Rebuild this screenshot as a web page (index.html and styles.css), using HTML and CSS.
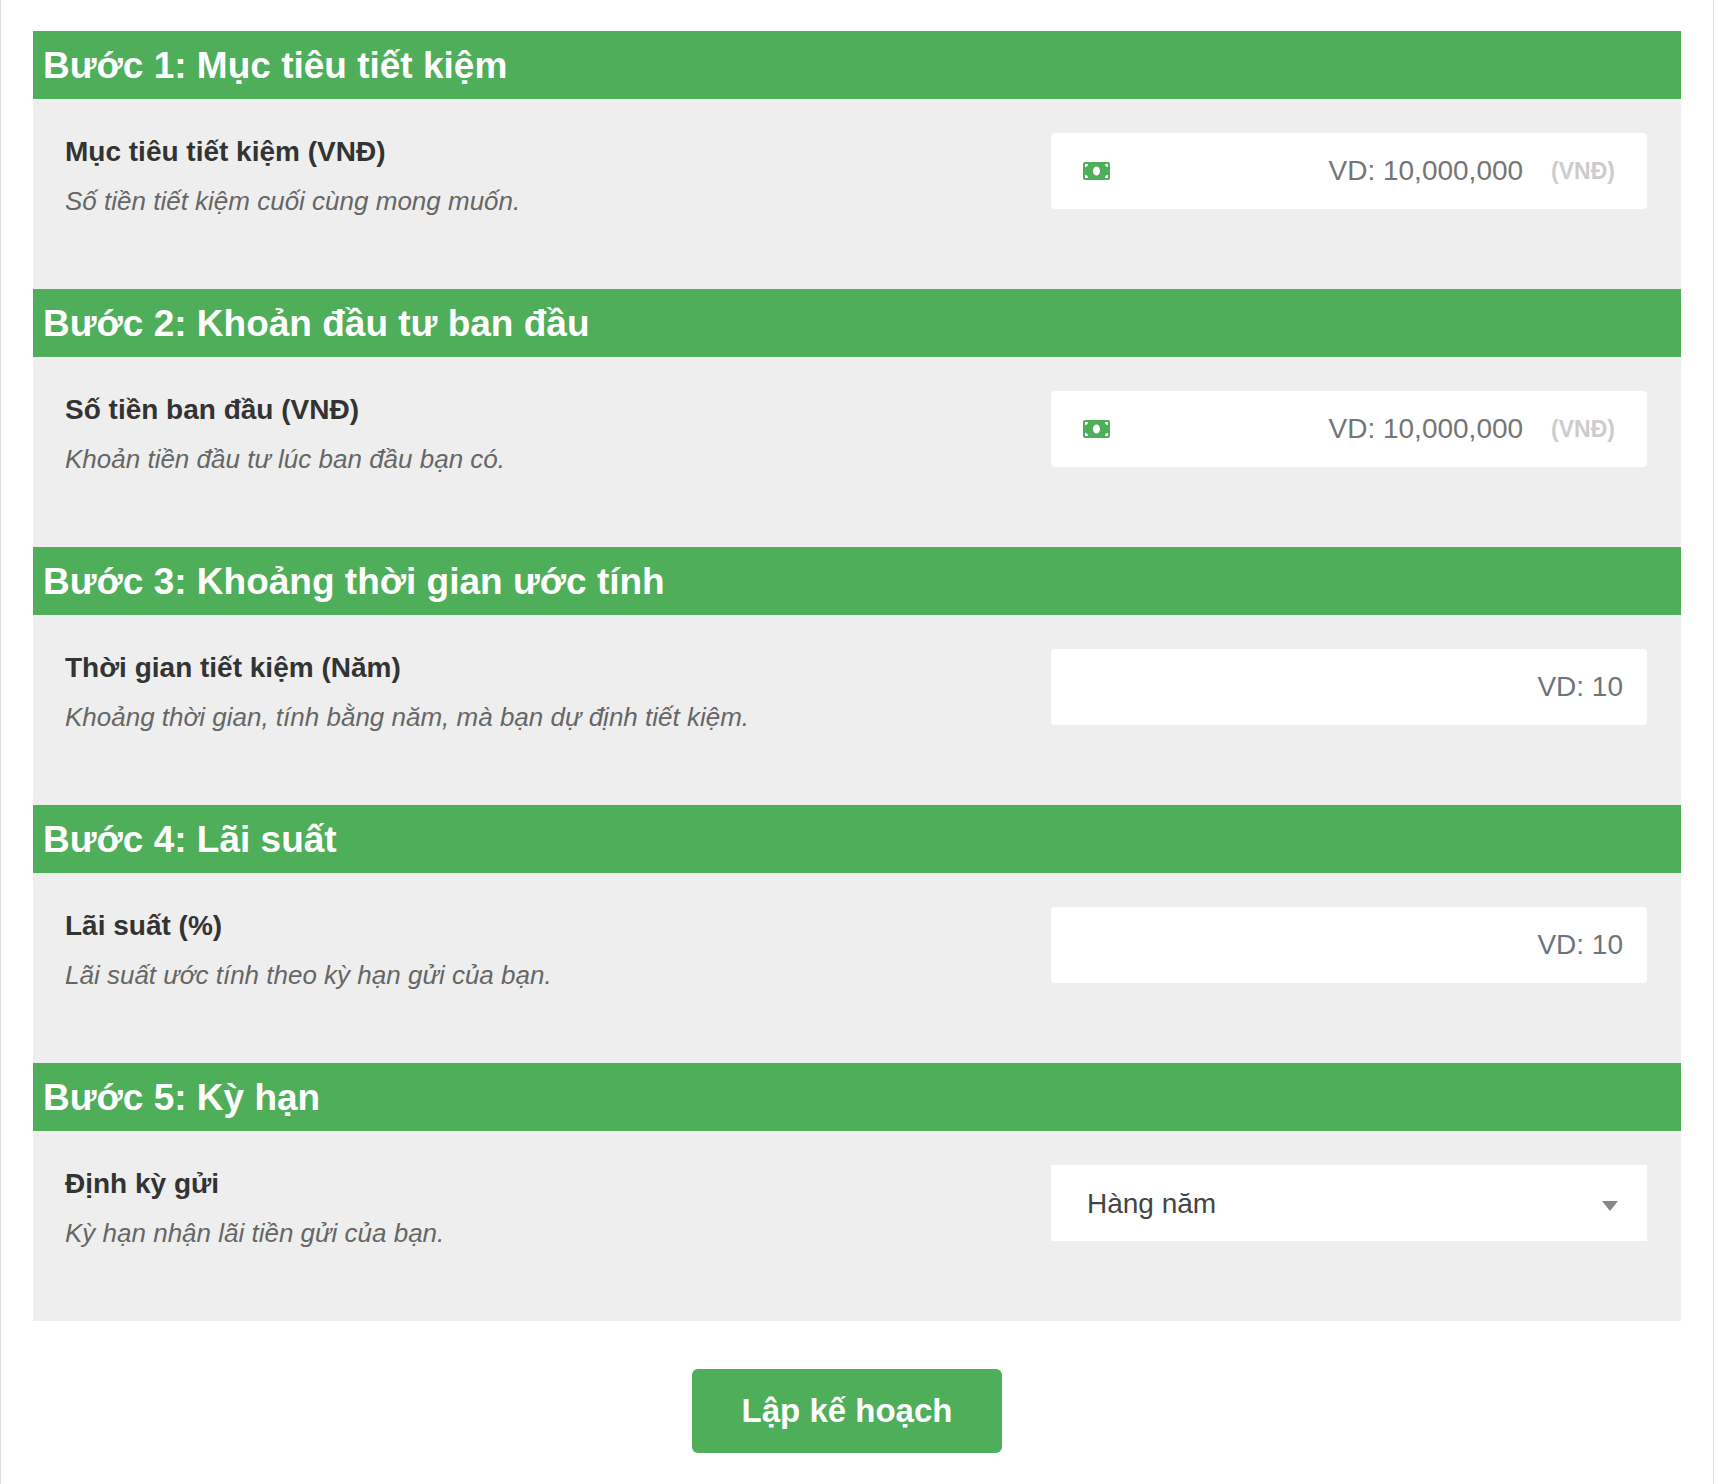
FILE: index.html
```
<!DOCTYPE html>
<html lang="vi">
<head>
<meta charset="utf-8">
<meta name="viewport" content="width=device-width, initial-scale=1">
<title>Lập kế hoạch tiết kiệm</title>
<link rel="stylesheet" href="styles.css">
</head>
<body>
<svg class="sprite" aria-hidden="true">
  <symbol id="money" viewBox="0 0 27 18">
    <path fill="currentColor" fill-rule="evenodd" d="M2 0H25A2 2 0 0 1 27 2V16A2 2 0 0 1 25 18H2A2 2 0 0 1 0 16V2A2 2 0 0 1 2 0ZM2 2V5A3 3 0 0 0 5 2ZM22 2A3 3 0 0 0 25 5V2ZM2 13V16H5A3 3 0 0 0 2 13ZM25 13A3 3 0 0 0 22 16H25ZM13.500 4.500C11.500 4.500 10 6.500 10 9S11.500 13.500 13.500 13.500S17 11.500 17 9S15.500 4.500 13.500 4.500Z"/>
  </symbol>
</svg>
<main class="calculator">
  <form class="plan">
    <section class="step">
      <h2 class="step-title">Bước 1: Mục tiêu tiết kiệm</h2>
      <div class="step-body">
        <div class="info">
          <label class="label" for="goal">Mục tiêu tiết kiệm (VNĐ)</label>
          <p class="hint">Số tiền tiết kiệm cuối cùng mong muốn.</p>
        </div>
        <div class="field">
          <svg class="money"><use href="#money"/></svg>
          <input class="input" id="goal" type="text" inputmode="numeric" placeholder="VD: 10,000,000">
          <span class="unit">(VNĐ)</span>
        </div>
      </div>
    </section>
    <section class="step">
      <h2 class="step-title">Bước 2: Khoản đầu tư ban đầu</h2>
      <div class="step-body">
        <div class="info">
          <label class="label" for="initial">Số tiền ban đầu (VNĐ)</label>
          <p class="hint">Khoản tiền đầu tư lúc ban đầu bạn có.</p>
        </div>
        <div class="field">
          <svg class="money"><use href="#money"/></svg>
          <input class="input" id="initial" type="text" inputmode="numeric" placeholder="VD: 10,000,000">
          <span class="unit">(VNĐ)</span>
        </div>
      </div>
    </section>
    <section class="step">
      <h2 class="step-title">Bước 3: Khoảng thời gian ước tính</h2>
      <div class="step-body">
        <div class="info">
          <label class="label" for="years">Thời gian tiết kiệm (Năm)</label>
          <p class="hint">Khoảng thời gian, tính bằng năm, mà bạn dự định tiết kiệm.</p>
        </div>
        <div class="field field-plain">
          <input class="input" id="years" type="text" inputmode="numeric" placeholder="VD: 10">
        </div>
      </div>
    </section>
    <section class="step">
      <h2 class="step-title">Bước 4: Lãi suất</h2>
      <div class="step-body">
        <div class="info">
          <label class="label" for="rate">Lãi suất (%)</label>
          <p class="hint">Lãi suất ước tính theo kỳ hạn gửi của bạn.</p>
        </div>
        <div class="field field-plain">
          <input class="input" id="rate" type="text" inputmode="decimal" placeholder="VD: 10">
        </div>
      </div>
    </section>
    <section class="step">
      <h2 class="step-title">Bước 5: Kỳ hạn</h2>
      <div class="step-body">
        <div class="info">
          <label class="label" for="term">Định kỳ gửi</label>
          <p class="hint">Kỳ hạn nhận lãi tiền gửi của bạn.</p>
        </div>
        <div class="field field-select">
          <select class="select" id="term">
            <option>Hàng năm</option>
            <option>Hàng quý</option>
            <option>Hàng tháng</option>
          </select>
          <svg class="caret" viewBox="0 0 16 10" aria-hidden="true"><path fill="currentColor" d="M0 0H16L8 10Z"/></svg>
        </div>
      </div>
    </section>
    <div class="actions">
      <button class="submit" type="button">Lập kế hoạch</button>
    </div>
  </form>
</main>
</body>
</html>
```
FILE: styles.css
```
* {
  box-sizing: border-box;
}

body {
  margin: 0;
  background: #fff;
  color: #333;
  font-family: "Liberation Sans", Arial, sans-serif;
}

.sprite {
  display: none;
}

.calculator {
  min-height: 100vh;
  padding: 31px 32px;
  border: solid #ddd;
  border-width: 0 1px;
}

.step-title {
  margin: 0;
  padding: 11px 10px 9px;
  background: #4fae5a;
  color: #fff;
  font-size: 37px;
  line-height: 48px;
}

.step-body {
  display: grid;
  grid-template-columns: minmax(0, 1fr) minmax(320px, 596px);
  align-items: start;
  min-height: 190px;
  padding: 34px 34px 34px 32px;
  background: #eee;
}

.label {
  display: block;
  padding-bottom: 10px;
  font-size: 28px;
  font-weight: 700;
  line-height: 38px;
}

.hint {
  margin: 0;
  color: #666;
  font-size: 26px;
  font-style: italic;
  line-height: 40px;
}

.field {
  display: flex;
  align-items: center;
  height: 76px;
  padding: 0 32px;
  border-radius: 4px;
  background: #fff;
}

.field-plain {
  padding: 0 24px;
}

.field-select {
  position: relative;
  padding: 0;
  border-radius: 0;
}

.money {
  flex: none;
  width: 27px;
  height: 18px;
  color: #4fae5a;
}

.input,
.select {
  flex: 1;
  min-width: 0;
  height: 100%;
  border: 0;
  background: transparent;
  color: #444;
  font: inherit;
  font-size: 28px;
}

.input {
  padding: 0;
  text-align: right;
}

.input::placeholder {
  color: #757575;
  opacity: 1;
}

.field-plain .input::placeholder {
  color: #6c757d;
}

.unit {
  margin-left: 28px;
  color: #ccc;
  font-size: 23px;
  font-weight: 700;
}

.select {
  padding: 0 48px 0 36px;
  appearance: none;
}

.caret {
  position: absolute;
  top: 36px;
  right: 29px;
  width: 16px;
  height: 10px;
  color: #888;
  pointer-events: none;
}

.actions {
  display: flex;
  justify-content: center;
  padding: 48px 20px 0 0;
}

.submit {
  height: 84px;
  padding: 0 50px;
  border: 0;
  border-radius: 6px;
  background: #4fae5a;
  color: #fff;
  font: inherit;
  font-size: 33px;
  font-weight: 700;
}
```
